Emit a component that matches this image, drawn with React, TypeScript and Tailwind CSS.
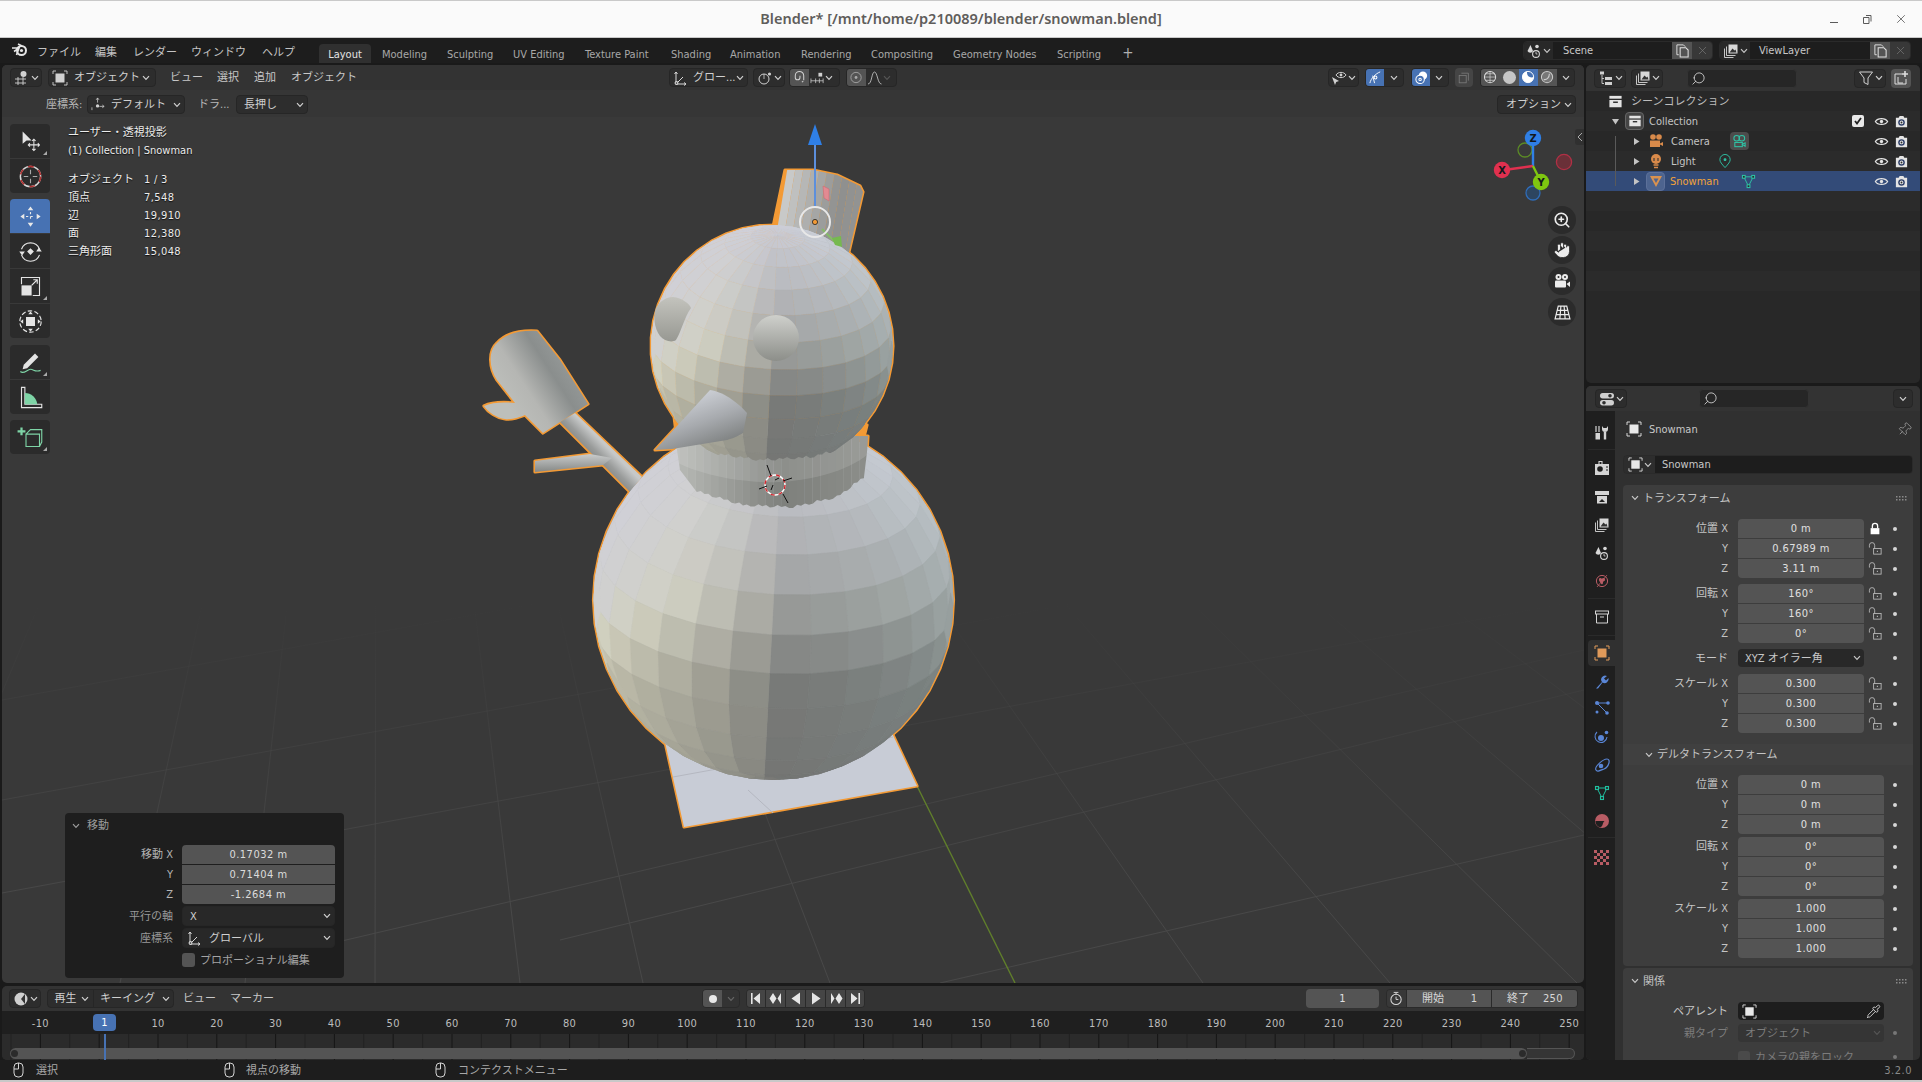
import React from "react";
import { ZoomIn, Hand, Pin, Pipette, Search, X } from "lucide-react";

type P = { children?: React.ReactNode; className?: string };
const Sv = ({ s = 16, children, className = "" }: P & { s?: number }) => (
  <svg width={s} height={s} viewBox="0 0 16 16" fill="none" stroke="currentColor" strokeWidth={1.1} className={"shrink-0 " + className}>{children}</svg>
);
const Chev = ({ className = "" }: P) => (
  <svg width="8" height="6" viewBox="0 0 8 6" fill="none" stroke="currentColor" strokeWidth={1.2} className={"shrink-0 " + className}><path d="M1 1.2 4 4.4 7 1.2" /></svg>
);
const ObjIcon = ({ s = 16, className = "" }: { s?: number; className?: string }) => (
  <Sv s={s} className={className}>
    <path d="M1 4V1h3M12 1h3v3M15 12v3h-3M4 15H1v-3" strokeWidth={0.9} />
    <rect x="3.5" y="3.5" width="9" height="9" fill="currentColor" stroke="none" />
  </Sv>
);
const Eye = () => (
  <Sv s={15} className="text-[#e4e4e4]"><path d="M1.5 8C4 3.8 12 3.8 14.5 8 12 12.2 4 12.2 1.5 8Z" strokeWidth={1.4} /><circle cx="8" cy="8" r="1.8" fill="currentColor" stroke="none" /></Sv>
);
const Cam = () => (
  <Sv s={15} className="text-[#e4e4e4]"><path d="M2 4h3l1-2h4l1 2h3v10H2Z" fill="currentColor" stroke="none" /><circle cx="8" cy="9" r="3.5" fill="#2d3e66" stroke="none" /><circle cx="8" cy="9" r="2" fill="currentColor" stroke="none" /><circle cx="8" cy="9" r="1" fill="#2d2d2d" stroke="none" /></Sv>
);
const Lock = ({ closed }: { closed?: boolean }) =>
  closed ? (
    <Sv s={14} className="text-white"><rect x="3" y="7" width="10" height="7" fill="currentColor" stroke="none" /><path d="M5 7V4.5a3 3 0 0 1 6 0V7" strokeWidth={1.5} /></Sv>
  ) : (
    <Sv s={15} className="text-[#bdbdbd]"><rect x="6" y="8" width="8" height="6" strokeWidth={0.9} /><path d="M1.5 7V4.5a2.8 2.8 0 0 1 5.6 0V8" strokeWidth={0.9} /><path d="M10 10.3v1.5" /></Sv>
  );
const Dot = ({ className = "bg-[#d6d6d6]" }: { className?: string }) => <div className={"h-[4px] w-[4px] rounded-full " + className} />;
const Axes = () => (
  <Sv s={16} className="text-[#d8d8d8]"><path d="M4 14V2M2.5 4 4 2l1.5 2M4 14h10M12 12.5l2 1.5-2 1.5M4 14l7-7" strokeWidth={1} /><circle cx="4.5" cy="13" r="1.4" fill="#333" /></Sv>
);
const Scene = () => (
  <Sv s={16} className="text-[#d8d8d8]"><path d="M4.5 2 7 8a3 3 0 0 1-5.5 0Z" fill="currentColor" stroke="none" /><circle cx="11" cy="3.5" r="1.8" fill="currentColor" stroke="none" /><circle cx="10" cy="11" r="3.4" /><path d="M10 9v2h1.5" strokeWidth={0.8} /></Sv>
);
const Layers = () => (
  <Sv s={16} className="text-[#d8d8d8]"><rect x="5.5" y="1.5" width="9" height="9" fill="#d8d8d8" stroke="none" /><path d="m6.5 9.5 3-4 2 2 1-1 1 3Z" fill="#333" stroke="none" /><path d="M3.5 3.5v9h9M1.5 5.5v9h9" strokeWidth={0.9} /></Sv>
);
const Copy = () => (
  <Sv s={15} className="text-[#e2e2e2]"><path d="M4 12.5H2V2h7l2 2" strokeWidth={1} /><path d="M5.5 5h6l2.5 2.5V15H5.5Z" strokeWidth={1.1} /></Sv>
);
const Archive = ({ s = 15, className = "text-[#e4e4e4]" }: { s?: number; className?: string }) => (
  <Sv s={s} className={className}><rect x="1.5" y="2" width="13" height="3" fill="currentColor" stroke="none" /><path d="M1.5 6.5h13V14h-13Z" fill="currentColor" stroke="none" /><rect x="5.5" y="8" width="5" height="1.6" fill="#333" stroke="none" /></Sv>
);
const VMesh = ({ className = "text-[#2ec4a6]", s = 15 }: { className?: string; s?: number }) => (
  <Sv s={s} className={className}><path d="M3 3h10L8 13Z" strokeWidth={1} /><rect x="1.5" y="1.5" width="3" height="3" fill="#2b2b2b" /><rect x="11.5" y="1.5" width="3" height="3" fill="#2b2b2b" /><rect x="6.5" y="11.5" width="3" height="3" fill="#2b2b2b" /></Sv>
);

const DD = ({ className = "", children }: P) => (
  <div className={"flex h-[19px] shrink-0 items-center overflow-hidden rounded-[4px] border border-[#262626] bg-[#2d2d2d] text-[#d0d0d0] " + className}>{children}</div>
);

/* ---------- top ---------- */
const tabs = [
  ["Modeling", "w-[65px]"], ["Sculpting", "w-[66px]"], ["UV Editing", "w-[72px]"], ["Texture Paint", "w-[86px]"], ["Shading", "w-[59px]"],
  ["Animation", "w-[71px]"], ["Rendering", "w-[70px]"], ["Compositing", "w-[82px]"], ["Geometry Nodes", "w-[104px]"], ["Scripting", "w-[64px]"],
];
const menus = [["ファイル", "w-[58px]"], ["編集", "w-[38px]"], ["レンダー", "w-[58px]"], ["ウィンドウ", "w-[71px]"], ["ヘルプ", "w-[57px]"]];

function TitleBar() {
  return (
    <div className="relative flex h-[38px] shrink-0 items-center justify-center border-y border-[#c9c9c9] bg-[#fafafa] [font-family:'Noto_Sans',sans-serif] font-stretch-normal">
      <div className="text-[14.5px] font-semibold text-[#5f5d5b]">Blender* [/mnt/home/p210089/blender/snowman.blend]</div>
      <div className="absolute right-[14px] top-0 flex h-full items-center gap-[21px] text-[#5a5a5a]">
        <svg width="12" height="12" viewBox="0 0 12 12" stroke="currentColor" fill="none"><path d="M2 9.5h8" /></svg>
        <svg width="12" height="12" viewBox="0 0 12 12" stroke="currentColor" fill="none"><path d="M2.5 4.5h5.5v6H2.5ZM5 2.5h5v6" /></svg>
        <X size={14} strokeWidth={1.4} />
      </div>
    </div>
  );
}
function TopBar() {
  return (
    <div className="flex h-[25px] shrink-0 items-stretch bg-[#1d1d1d] text-[11px] text-[#c4c4c4]">
      <div className="flex w-[37px] items-center justify-center pb-[1px]">
        <svg width="17" height="14" viewBox="0 0 17 14" fill="none" className="ml-[2px]"><circle cx="10.5" cy="7.5" r="4.5" stroke="#e6e6e6" strokeWidth="2" /><circle cx="10.5" cy="7.5" r="1.6" fill="#e6e6e6" /><path d="M1 5h7M3 8.5 8 5l-2.5 7M7 1l4 2" stroke="#e6e6e6" strokeWidth="1.6" /></svg>
      </div>
      {menus.map(([t, w]) => <div key={t} className={"flex items-center pt-[4px] " + w}><span>{t}</span></div>)}
      <div className="mt-[6px] flex w-[52px] items-center justify-center rounded-t-[4px] bg-[#303030] pt-[2px] text-[#e4e4e4]"><span>Layout</span></div>
      {tabs.map(([t, w]) => <div key={t} className={"mt-[6px] flex items-center pl-[11px] pt-[2px] text-[#a8a8a8] " + w}><span>{t}</span></div>)}
      <div className="flex w-[20px] items-center justify-center pl-[16px] pt-[5px] text-[15px] text-[#b0b0b0]">+</div>
      <div className="ml-auto mr-[11px] flex items-center gap-[6px]">
        <SceneField icon={<Scene />} label="Scene" a="w-[29px]" f="w-[119px] pl-[10px]" />
        <SceneField icon={<Layers />} label="ViewLayer" a="w-[30px]" f="w-[120px] pl-[9px]" />
      </div>
    </div>
  );
}
function SceneField({ icon, label, a, f }: { icon: React.ReactNode; label: string; a: string; f: string }) {
  return (
    <div className="flex h-[19px] overflow-hidden rounded-[4px] border border-[#2a2a2a]">
      <div className={"flex items-center justify-center gap-[1px] bg-[#282828] " + a}>{icon}<Chev /></div>
      <div className={"flex items-center bg-[#1d1d1d] text-[#c8c8c8] " + f}><span>{label}</span></div>
      <div className="flex w-[20px] items-center justify-center bg-[#545454]"><Copy /></div>
      <div className="flex w-[20px] items-center justify-center bg-[#383838] text-[#777]"><X size={13} strokeWidth={1.3} /></div>
    </div>
  );
}

/* ---------- viewport header ---------- */
function ViewHeader() {
  return (
    <div className="flex h-[25px] shrink-0 items-center bg-[#333] pl-[8px] pr-[9px] text-[11px] text-[#c8c8c8]">
      <DD className="w-[32px] justify-center gap-[1px]">
        <Sv s={16}><path d="M1 9h11M1 13h11M4 7v8M9 7v8" strokeWidth={0.9} /><circle cx="9.5" cy="4" r="3" fill="currentColor" stroke="none" /></Sv><Chev />
      </DD>
      <DD className="ml-[6px] w-[108px] px-[3px]">
        <ObjIcon s={16} /><span className="ml-[6px] flex-1">オブジェクト</span><Chev className="mr-[2px]" />
      </DD>
      <span className="ml-[14px] w-[47px]">ビュー</span>
      <span className="w-[37px]">選択</span>
      <span className="w-[37px]">追加</span>
      <span className="w-[378px]">オブジェクト</span>
      <DD className="w-[79px] px-[2px]"><Axes /><span className="ml-[5px] flex-1 whitespace-nowrap">グロー...</span><Chev className="mr-[1px]" /></DD>
      <DD className="ml-[5px] w-[32px] justify-center gap-[1px]">
        <Sv s={16}><circle cx="7" cy="9" r="5" strokeWidth={1} /><circle cx="12.5" cy="4" r="1.6" fill="currentColor" stroke="none" /><path d="M7 4v5" strokeWidth={0.8} /></Sv><Chev />
      </DD>
      <DD className="ml-[4px] w-[51px]">
        <div className="flex h-full w-[19px] items-center justify-center bg-[#545454]"><Sv s={15}><path d="M12.5 11V6a4.5 4.5 0 0 0-9 0v2a2.5 2.5 0 0 0 5 0V6" strokeWidth={1.1} /><path d="M10.5 13 12 12" /></Sv></div>
        <Sv s={15} className="ml-[1px]"><path d="M1 9v5M14 9v5M6 9v5M10 9v5M1 11.5h13" strokeWidth={0.8} /><rect x="9" y="3" width="4" height="4" fill="currentColor" stroke="none" /></Sv><Chev />
      </DD>
      <DD className="ml-[6px] w-[51px]">
        <div className="flex h-full w-[19px] items-center justify-center bg-[#545454]"><Sv s={15} className="text-[#aaa]"><circle cx="7.5" cy="8" r="5.5" strokeWidth={0.9} /><circle cx="7.5" cy="8" r="1.5" fill="currentColor" stroke="none" /></Sv></div>
        <Sv s={16} className="ml-[1px] text-[#bdbdbd]"><path d="M1 14c4 0 3.5-12 6.5-12s3 12 7 12" strokeWidth={0.9} /></Sv><Chev className="text-[#555]" />
      </DD>
      <DD className="ml-auto w-[31px] justify-center gap-[1px]">
        <Sv s={16}><path d="M5 5C7 1.5 13 1.5 15 5 13 8.5 7 8.5 5 5Z" strokeWidth={1} /><circle cx="10" cy="5" r="1.4" fill="currentColor" stroke="none" /><path d="m1 7 3 8 1.2-3L8 11Z" fill="currentColor" stroke="none" /></Sv><Chev />
      </DD>
      <DD className="ml-[6px] w-[39px]">
        <div className="flex h-full w-[18px] items-center justify-center bg-[#4772b3] text-white"><Sv s={15}><path d="M2 14C3 9 8 4 13 2M5 6l2 8" strokeWidth={1} /><circle cx="8" cy="8" r="1.5" /></Sv></div>
        <Chev className="mx-auto" />
      </DD>
      <DD className="ml-[7px] w-[38px]">
        <div className="flex h-full w-[18px] items-center justify-center bg-[#4772b3] text-white"><Sv s={15}><circle cx="9.5" cy="6" r="4.5" fill="currentColor" stroke="none" /><circle cx="6.5" cy="10" r="4.5" fill="#4772b3" /><circle cx="6.5" cy="10" r="1.3" /></Sv></div>
        <Chev className="mx-auto" />
      </DD>
      <div className="ml-[6px] flex h-[19px] w-[18px] shrink-0 items-center justify-center rounded-[4px] bg-[#454545] text-[#7e7e7e]"><Sv s={14}><path d="M5 2.5h8V11" strokeWidth={0.9} /><rect x="2.5" y="5" width="8" height="8.5" strokeWidth={0.9} /></Sv></div>
      <DD className="ml-[7px] w-[95px] border-[#2a2a2a]">
        <div className="flex h-full w-[19px] items-center justify-center bg-[#545454]"><Sv s={15} className="text-[#ddd]"><circle cx="7.5" cy="7.5" r="6" /><path d="M1.5 7.5h12M7.5 1.5v12M3 4h9M3 11h9" strokeWidth={0.7} /></Sv></div>
        <div className="flex h-full w-[19px] items-center justify-center bg-[#545454]"><div className="h-[13px] w-[13px] rounded-full bg-[#c6c6c6]" /></div>
        <div className="flex h-full w-[19px] items-center justify-center bg-[#4772b3]"><Sv s={15} className="text-white"><circle cx="7.5" cy="7.5" r="6" strokeWidth={1} /><path d="M1.5 7.5a6 6 0 0 0 12 0 6 6 0 0 1-6-1 7 7 0 0 1-1-5 6 6 0 0 0-5 6Z" fill="currentColor" stroke="none" /></Sv></div>
        <div className="flex h-full w-[19px] items-center justify-center bg-[#545454]"><Sv s={15} className="text-[#ccc]"><circle cx="7.5" cy="7.5" r="6" fill="#777" /><path d="M4 10c3 1 6-2 6-6" strokeWidth={1.2} /></Sv></div>
        <Chev className="mx-auto" />
      </DD>
    </div>
  );
}
function ToolSettings() {
  return (
    <div className="flex h-[27px] shrink-0 items-center bg-[#363636] pl-[44px] pr-[8px] pt-[2px] text-[11px] text-[#b8b8b8]">
      <span className="w-[41px]">座標系:</span>
      <DD className="w-[98px] px-[3px]"><Sv s={15}><path d="M7 1v5M5.5 3 7 1l1.5 2M1 14V11M9 10h5M12 8.5l2 1.5-2 1.5" strokeWidth={0.8} /><circle cx="7" cy="9.5" r="1.8" fill="currentColor" stroke="none" /></Sv><span className="ml-[5px] flex-1">デフォルト</span><Chev /></DD>
      <span className="ml-[13px] w-[38px]">ドラ...</span>
      <DD className="w-[72px] pl-[7px] pr-[3px]"><span className="flex-1">長押し</span><Chev /></DD>
      <DD className="ml-auto w-[79px] pl-[8px] pr-[3px]"><span className="flex-1">オプション</span><Chev /></DD>
    </div>
  );
}

/* ---------- left tools ---------- */
const Corner = () => <div className="absolute bottom-[3px] right-[3px] h-0 w-0 border-b-[4px] border-l-[4px] border-b-[#aaa] border-l-transparent" />;
function Tool({ children, corner, active, cls = "" }: { children: React.ReactNode; corner?: boolean; active?: boolean; cls?: string }) {
  return <div className={"relative flex h-[34px] items-center justify-center " + (active ? "bg-[#4772b3] " : "bg-[#2b2b2b] ") + cls}>{children}{corner && <Corner />}</div>;
}
const T24 = ({ children }: P) => <svg width="27" height="27" viewBox="0 0 24 24" fill="none" stroke="#e4e4e4" strokeWidth={1}>{children}</svg>;
function ToolBar() {
  return (
    <div className="absolute left-[8px] top-[59px] flex w-[40px] flex-col text-white">
      <div className="flex flex-col gap-[1px] overflow-hidden rounded-[4px]">
        <Tool corner><T24><path d="M5 3v11l3.5-3H13Z" fill="#e4e4e4" stroke="none" /><path d="M15 10v10M10 15h10M13.5 11.5 15 10l1.5 1.5M13.5 18.5 15 20l1.5-1.5M11.5 13.5 10 15l1.5 1.5M18.5 13.5 20 15l-1.5 1.5" strokeWidth={0.9} /></T24></Tool>
        <Tool><T24><circle cx="12" cy="12" r="9" stroke="#d8d8d8" strokeWidth={1.3} /><circle cx="12" cy="12" r="9" stroke="#b03030" strokeWidth={1.4} strokeDasharray="5 5" /><path d="M12 6v4M12 14v4M6 12h4M14 12h4" stroke="#aaa" /></T24></Tool>
      </div>
      <div className="mt-[6px] flex flex-col gap-[1px] overflow-hidden rounded-[4px]">
        <Tool active><T24><path d="M12 3l2.5 3.5h-5ZM12 21l2.5-3.5h-5ZM3 12l3.5-2.5v5ZM21 12l-3.5-2.5v5Z" fill="#e8e8e8" stroke="none" /><path d="M12 8v8M8 12h8" stroke="#e8e8e8" strokeDasharray="2 2" /></T24></Tool>
        <Tool><T24><path d="M4 10a8.5 8.5 0 0 1 16 0M20 15a8.5 8.5 0 0 1-16 0" /><path d="M2 12h5l-2.5 3.5ZM17 12h5l-2.5-3.5ZM12 9l3 3-3 3-3-3Z" fill="#e4e4e4" stroke="none" /></T24></Tool>
        <Tool corner><T24><rect x="4" y="11" width="9" height="9" fill="#e4e4e4" stroke="none" /><path d="M4 10V4h16v16h-6M13 11l5-5M14.5 6H18v3.5" /></T24></Tool>
        <Tool><T24><circle cx="12" cy="12" r="9.5" strokeDasharray="4 2" /><rect x="8" y="8" width="8" height="8" fill="#e4e4e4" stroke="none" /><path d="M12 3l2 2.5h-4ZM12 21l2-2.5h-4ZM3 12l2.5-2v4ZM21 12l-2.5-2v4Z" fill="#e4e4e4" stroke="none" /></T24></Tool>
      </div>
      <div className="mt-[7px] flex flex-col gap-[1px] overflow-hidden rounded-[4px]">
        <Tool corner><T24><path d="M6 14 16 4l3 3L9 17l-4 1Z" fill="#e4e4e4" stroke="none" /><path d="M3 20c3 3 6-2 9-2s4 3 9 1" stroke="#7ed4a6" /></T24></Tool>
        <Tool><T24><path d="M4 3h3v15h15v3H4Z" stroke="#e4e4e4" /><path d="M7 8a11 11 0 0 1 11 10H7Z" fill="#7ed4a6" stroke="none" /></T24></Tool>
      </div>
      <div className="mt-[6px] overflow-hidden rounded-[4px]">
        <Tool corner><T24><path d="M8 9h12v11H8ZM8 9l4-4h10v11l-2 4" stroke="#7ed4a6" /><path d="M4 3v7M0.5 6.5h7" stroke="#7ed4a6" strokeWidth={2} /></T24></Tool>
      </div>
    </div>
  );
}

/* ---------- snowman ---------- */
const lerp = (a: number, b: number, t: number) => a + (b - a) * t;
function shade(nx: number, ny: number) {
  const tbl = [[-1, 116], [-0.5, 120], [-0.3, 134], [0, 158], [0.5, 184], [1, 204]];
  let r = 158;
  for (let i = 0; i < 5; i++) if (ny >= tbl[i][0] && ny <= tbl[i + 1][0]) r = lerp(tbl[i][1], tbl[i + 1][1], (ny - tbl[i][0]) / (tbl[i + 1][0] - tbl[i][0]));
  const w = Math.pow(Math.max(0, -nx), 0.6);
  const e = Math.max(0, nx);
  const amp = Math.max(16, 70 - 62 * Math.max(0, ny));
  const R = Math.min(208, r + amp * w + 2 * e);
  const G = Math.min(208, r + 1 + amp * 0.96 * w + 9 * e);
  const B = Math.min(216, r + (ny > 0 ? 10 * ny : -1) + amp * 0.72 * w + 10 * e);
  return `rgb(${Math.round(R)},${Math.round(G)},${Math.round(B)})`;
}
function sphere(cx: number, cy: number, r: number, eDeg: number, rollDeg: number) {
  const M = 14, N = 28;
  const e = (eDeg * Math.PI) / 180, ro = (rollDeg * Math.PI) / 180;
  const pt = (t: number, p: number) => {
    const x = Math.sin(t) * Math.cos(p), y = Math.cos(t), z = Math.sin(t) * Math.sin(p);
    const y1 = y * Math.cos(e) - z * Math.sin(e), z1 = y * Math.sin(e) + z * Math.cos(e);
    return [x * Math.cos(ro) + y1 * Math.sin(ro), -x * Math.sin(ro) + y1 * Math.cos(ro), z1];
  };
  const out: { pts: string; fill: string }[] = [];
  for (let i = 0; i < M; i++) for (let j = 0; j < N; j++) {
    const t0 = (i * Math.PI) / M, t1 = ((i + 1) * Math.PI) / M, p0 = (j * 2 * Math.PI) / N, p1 = ((j + 1) * 2 * Math.PI) / N;
    const c = pt((t0 + t1) / 2, (p0 + p1) / 2);
    if (c[2] < -0.15) continue;
    const pts = [pt(t0, p0), pt(t1, p0), pt(t1, p1), pt(t0, p1)].map((q) => `${(cx + r * q[0]).toFixed(1)},${(cy - r * q[1]).toFixed(1)}`).join(" ");
    out.push({ pts, fill: shade(c[0], c[1]) });
  }
  return out;
}
const circlePath = (cx: number, cy: number, r: number) => {
  let d = "";
  for (let i = 0; i < 48; i++) { const a = (i / 48) * 2 * Math.PI; d += `${i ? "L" : "M"}${(cx + r * Math.cos(a)).toFixed(1)},${(cy + r * Math.sin(a)).toFixed(1)} `; }
  return d + "Z";
};
const jag = (pts: number[][]) => {
  let d = "", k = 0;
  for (let i = 0; i < pts.length - 1; i++) {
    const [a, b] = pts[i], [c, e] = pts[i + 1];
    const n = Math.max(1, Math.round(Math.hypot(c - a, e - b) / 4));
    for (let s = 0; s < n; s++) { const o = [1.3, -0.8, 0.5, -1.4, 0.9][k++ % 5]; d += `L${(a + ((c - a) * s) / n).toFixed(1)},${(b + ((e - b) * s) / n + o).toFixed(1)} `; }
  }
  return d;
};
const headArc = (() => {
  let d = "";
  for (let a = -40; a <= 220; a += 8) { const r = (a * Math.PI) / 180; d += `${a === -40 ? "M" : "L"}${(772 + 121 * Math.cos(r)).toFixed(1)},${(346 - 121 * Math.sin(r)).toFixed(1)} `; }
  return d;
})();
const bodyD = circlePath(773.5, 600, 180);
const headD = headArc + jag([[678, 446], [713, 453], [760, 460], [810, 457], [866, 443]]) + "L867,425 Z";
const neckD = "M675,436 L868,436 L867,452 L864,477 " + jag([[864, 477], [837, 497], [793, 507], [743, 505], [693, 490]]) + "L680,470 Z";
const hatD = "M773,227 L785,170 L813,170 L837,175 L860,186 L863,192 L848,256 Z";
const planeD = "M665,742 L684,827 L917,786 L892,733 Z";
const stickD = "M642,477 L630,492 L560,422 L575,413 Z";
const branchD = "M535,461 L535,472 L603,465 L612,458 L590,454 Z";
const mittenD = "M537,331 C520,330 505,334 497,343 C488,351 489,368 497,380 L515,403 C505,402 492,402 484,406 C488,412 497,418 505,419 C512,420 520,417 525,415 L543,433 L588,404 L560,360 Z";
const noseD = "M655,450 L710,390 C725,392 740,405 747,413 L743,433 C735,438 727,440 727,440 L672,449 Z";
const eyeL = "M673,297 C682,298 690,304 691,308 C684,318 682,330 676,340 C672,343 664,341 660,336 C654,328 653,315 656,308 C660,301 666,297 673,297 Z";
const bodyPolys = sphere(773.5, 600, 181, 24, 3);
const headPolys = sphere(772, 346, 122, 24, 3);
const hatStrips = Array.from({ length: 12 }, (_, k) => {
  const x = 772 + k * 8;
  const t = k / 11;
  const v = Math.round(t < 0.6 ? lerp(200, 142, t / 0.6) : lerp(142, 150, (t - 0.6) / 0.4));
  return { d: `M${x},260 L${x + 8},260 L${x + 24},165 L${x + 16},165 Z`, f: `rgb(${v},${v + 1},${v})` };
});
const neckStrips = Array.from({ length: 26 }, (_, k) => {
  const x = 672 + k * 7.8;
  const t = k / 25;
  const v = t < 0.55 ? lerp(184, 126, t / 0.55) : lerp(126, 140, (t - 0.55) / 0.45);
  return { d: `M${x},430 h8 v85 h-8 Z`, f: `rgb(${v.toFixed(0)},${(v + 2).toFixed(0)},${(v - 2).toFixed(0)})` };
});
const gridA = [[2, 800, 1584, 510], [2, 893, 1584, 600], [282, 955, 1584, 650], [560, 940, 1584, 690], [940, 983, 1584, 835], [2, 700, 1000, 520]];
const gridB = [-120, 120, 245, 375, 520, 643, 830, 1203, 1390, 1577, 1760, 1950];

function Snowman() {
  const sil = [planeD, hatD, stickD, branchD, mittenD, bodyD, neckD, headD, noseD];
  return (
    <svg className="absolute inset-0 h-full w-full" viewBox="2 65 1582 918">
      <defs>
        <linearGradient id="gf" gradientUnits="userSpaceOnUse" x1="0" y1="600" x2="0" y2="900"><stop offset="0" stopColor="#464646" stopOpacity="0" /><stop offset="1" stopColor="#484848" /></linearGradient>
        <linearGradient id="mit" gradientUnits="userSpaceOnUse" x1="498" y1="392" x2="560" y2="352"><stop offset="0" stopColor="#bdbfbb" /><stop offset=".35" stopColor="#b5b6b3" /><stop offset=".75" stopColor="#8a8e8d" /><stop offset="1" stopColor="#949897" /></linearGradient>
        <linearGradient id="stk" gradientUnits="userSpaceOnUse" x1="590" y1="430" x2="575" y2="445"><stop offset="0" stopColor="#c6c8c8" /><stop offset=".5" stopColor="#9a9c9b" /><stop offset="1" stopColor="#7e8280" /></linearGradient>
        <linearGradient id="brn" gradientUnits="userSpaceOnUse" x1="0" y1="455" x2="0" y2="472"><stop offset="0" stopColor="#c6c8c8" /><stop offset="1" stopColor="#858886" /></linearGradient>
        <linearGradient id="nos" gradientUnits="userSpaceOnUse" x1="700" y1="395" x2="718" y2="445"><stop offset="0" stopColor="#c9ccd2" /><stop offset=".5" stopColor="#a7aaae" /><stop offset="1" stopColor="#7f8282" /></linearGradient>
        <linearGradient id="eye" gradientUnits="userSpaceOnUse" x1="0" y1="315" x2="0" y2="362"><stop offset="0" stopColor="#cfd0cc" /><stop offset="1" stopColor="#8b8d88" /></linearGradient>
        <linearGradient id="eyl" gradientUnits="userSpaceOnUse" x1="0" y1="297" x2="0" y2="342"><stop offset="0" stopColor="#c3c3bd" /><stop offset="1" stopColor="#979892" /></linearGradient>
        <clipPath id="cb"><path d={bodyD} /></clipPath>
        <clipPath id="ch"><path d={headD} /></clipPath>
        <clipPath id="cn"><path d={neckD} /></clipPath>
        <clipPath id="cht"><path d={hatD} /></clipPath>
      </defs>
      {gridA.map((l, i) => <line key={i} x1={l[0]} y1={l[1]} x2={l[2]} y2={l[3]} stroke="url(#gf)" strokeWidth="1" />)}
      {gridB.map((x) => <line key={x} x1={377} y1={-200} x2={x} y2={983} stroke="url(#gf)" strokeWidth="1" />)}
      <line x1="917" y1="786" x2="1015" y2="983" stroke="#607f2b" strokeWidth="1.4" />

      {sil.map((d, i) => <path key={i} d={d} fill="#f39a35" stroke="#f39a35" strokeWidth="3.2" strokeLinejoin="round" />)}
      <path d={planeD} fill="#c8ccd6" />
      <line x1="673" y1="777" x2="893" y2="737" stroke="#b4b7c0" strokeWidth="1" />
      <line x1="748" y1="790" x2="773" y2="813" stroke="#b4b7c0" strokeWidth="1" />
      <g clipPath="url(#cht)">{hatStrips.map((s, i) => <path key={i} d={s.d} fill={s.f} />)}</g>
      <path d={stickD} fill="url(#stk)" />
      <path d={branchD} fill="url(#brn)" />
      <path d={mittenD} fill="url(#mit)" />
      <path d={bodyD} fill="#a5a7a8" />
      <g clipPath="url(#cb)">{bodyPolys.map((p, i) => <polygon key={i} points={p.pts} fill={p.fill} stroke={p.fill} strokeWidth=".5" />)}</g>
      <g clipPath="url(#cn)">
        {neckStrips.map((s, i) => <path key={i} d={s.d} fill={s.f} />)}
        <path d="M670,430 H870 V452 C850,472 800,484 760,482 C720,480 690,470 672,460 Z" fill="#fff" opacity=".12" />
      </g>
      <g clipPath="url(#ch)">{headPolys.map((p, i) => <polygon key={i} points={p.pts} fill={p.fill} stroke={p.fill} strokeWidth=".5" />)}</g>
      <circle cx="776" cy="338" r="23" fill="url(#eye)" />
      <path d={eyeL} fill="url(#eyl)" />
      <path d={noseD} fill="url(#nos)" />

      {/* transform gizmo */}
      <line x1="815" y1="145" x2="815" y2="207" stroke="#5c8fdc" strokeWidth="2" />
      <path d="M815,124 L822,145 H808 Z" fill="#2f7fe6" />
      <path d="M823,186 L829,189 L829,201 L824,198 Z" fill="#e28a92" stroke="#d06a72" strokeWidth=".6" />
      <line x1="822" y1="229" x2="836" y2="243" stroke="#86bb68" strokeWidth="2" />
      <path d="M832,238 L841,236 L842,247 L835,245 Z" fill="#76b94f" />
      <circle cx="815" cy="222" r="15" fill="none" stroke="#e8e8e8" strokeWidth="2" />
      <circle cx="815" cy="222" r="2.6" fill="#f39a35" stroke="#222" strokeWidth=".8" />

      {/* 3d cursor */}
      <circle cx="775" cy="485" r="10" fill="none" stroke="#fff" strokeWidth="1.4" />
      <circle cx="775" cy="485" r="10" fill="none" stroke="#d0282f" strokeWidth="1.4" strokeDasharray="4 4" />
      <path d="M767,465 L771,476 M783,494 L788,503 M759,489 L767,486 M783,481 L792,478 M775,480 L779,478 M771,490 L773,485" stroke="#111" strokeWidth="1" />

      {/* navigation gizmo */}
      <circle cx="1525" cy="150" r="7" fill="none" stroke="#5b8a26" strokeWidth="1.3" />
      <circle cx="1564" cy="162" r="7.6" fill="#6a3038" stroke="#b03045" strokeWidth="1.3" />
      <circle cx="1533" cy="193" r="7" fill="#2d4560" stroke="#2f6cb8" strokeWidth="1.3" />
      <line x1="1533" y1="166" x2="1533" y2="140" stroke="#2f7fe6" strokeWidth="2.4" />
      <line x1="1533" y1="166" x2="1504" y2="170" stroke="#e0304f" strokeWidth="2.4" />
      <line x1="1533" y1="166" x2="1541" y2="182" stroke="#7fc610" strokeWidth="2.4" />
      <g fontSize="11" fontWeight="700" textAnchor="middle" fontFamily="'DejaVu Sans',sans-serif" fill="#14181c">
        <circle cx="1533" cy="138" r="8.2" fill="#2f7fe6" /><text x="1533" y="142">Z</text>
        <circle cx="1502" cy="170" r="8.2" fill="#e0304f" /><text x="1502" y="174">X</text>
        <circle cx="1541" cy="182" r="8.2" fill="#7fc610" /><text x="1541" y="186">Y</text>
      </g>
    </svg>
  );
}

/* ---------- viewport ---------- */
const NavBtn = ({ children, cls }: P & { cls: string }) => (
  <div className={"absolute left-[1546px] flex h-[28px] w-[28px] items-center justify-center rounded-full bg-[#2b2b2b] text-[#ececec] " + cls}>{children}</div>
);
const stats = [["頂点", "7,548"], ["辺", "19,910"], ["面", "12,380"], ["三角形面", "15,048"]];
function Viewport() {
  return (
    <div className="relative flex min-h-0 flex-1 flex-col overflow-hidden rounded-[5px] bg-[#393939]">
      <Snowman />
      <div className="relative z-10 flex flex-col"><ViewHeader /><ToolSettings /></div>
      <ToolBar />
      <div className="absolute left-[66px] top-[58px] text-[11px] leading-[18px] text-[#ececec] [text-shadow:0_1px_1px_#111]">
        <div><span className="block">ユーザー・透視投影</span></div>
        <div><span className="block">(1) Collection | Snowman</span></div>
        <div className="mt-[11px] flex"><span className="w-[76px]">オブジェクト</span><span className="tracking-[0.3px]">1 / 3</span></div>
        {stats.map(([a, b]) => <div key={a} className="flex"><span className="w-[76px]">{a}</span><span className="tracking-[0.4px]">{b}</span></div>)}
      </div>
      <NavBtn cls="top-[141px]"><ZoomIn size={18} strokeWidth={2.2} /></NavBtn>
      <NavBtn cls="top-[171px]"><Hand size={18} fill="#ececec" stroke="#2b2b2b" strokeWidth={1} /></NavBtn>
      <NavBtn cls="top-[202px]"><svg width="18" height="16" viewBox="0 0 18 16" fill="#ececec"><circle cx="5.500" cy="4" r="3" /><circle cx="12" cy="4" r="3" /><rect x="2" y="7.500" width="11" height="7" rx="1" /><path d="M13.500 11 17 8.500v5.500Z" /><circle cx="5.500" cy="4" r="1" fill="#2b2b2b" /><circle cx="12" cy="4" r="1" fill="#2b2b2b" /></svg></NavBtn>
      <NavBtn cls="top-[233px]"><Sv s={17}><path d="M4 2h8l3 12H1ZM1.500 10h13M3 6h10M6.500 2l-1 12M9.500 2l1 12" strokeWidth={1.1} /></Sv></NavBtn>
      <div className="absolute left-[1573px] top-[64px] flex h-[16px] w-[9px] items-center justify-center rounded-l-[3px] bg-[#303030] text-[#aaa]">
        <svg width="6" height="10" viewBox="0 0 6 10" fill="none" stroke="currentColor"><path d="M5 1 1 5l4 4" /></svg>
      </div>
      <RedoPanel />
    </div>
  );
}
function RedoPanel() {
  const F = ({ l, v, cls }: { l: string; v: string; cls: string }) => (
    <div className="mt-[1px] flex h-[19px] items-center"><span className="w-[107px] pr-[9px] text-right text-[#b4b4b4]">{l}</span><div className={"flex h-full w-[153px] items-center justify-center bg-[#545454] text-[#dcdcdc] " + cls}><span className="tracking-[0.5px]">{v}</span></div></div>
  );
  return (
    <div className="absolute bottom-[5px] left-[63px] h-[165px] w-[279px] rounded-[4px] bg-[#1e1e1e] pl-[10px] text-[11px]">
      <div className="flex h-[24px] items-center pt-[1px] text-[#9c9c9c]"><Chev className="-ml-[3px]" /><span className="ml-[7px]">移動</span></div>
      <div className="h-[7px]" />
      <F l="移動 X" v="0.17032 m" cls="rounded-t-[4px]" />
      <F l="Y" v="0.71404 m" cls="" />
      <F l="Z" v="-1.2684 m" cls="rounded-b-[4px]" />
      <div className="mt-[2px] flex h-[20px] items-center"><span className="w-[107px] pr-[9px] text-right text-[#999]">平行の軸</span><DD className="h-[20px] w-[153px] bg-[#282828] pl-[7px] pr-[3px]"><span className="flex-1">X</span><Chev /></DD></div>
      <div className="mt-[2px] flex h-[20px] items-center"><span className="w-[107px] pr-[9px] text-right text-[#999]">座標系</span><DD className="h-[20px] w-[153px] bg-[#282828] pl-[3px] pr-[3px]"><Axes /><span className="ml-[7px] flex-1">グローバル</span><Chev /></DD></div>
      <div className="mt-[5px] flex h-[14px] items-center pl-[107px] text-[#a4a4a4]"><div className="h-[14px] w-[13px] rounded-[3px] bg-[#545454]" /><span className="ml-[5px]">プロポーショナル編集</span></div>
    </div>
  );
}

/* ---------- timeline ---------- */
const fx = (f: number) => 97.2 + f * 5.88;
const nums = Array.from({ length: 27 }, (_, i) => -10 + i * 10);
const Seg = ({ children, cls = "" }: P & { cls?: string }) => <div className={"flex h-full items-center justify-center border-r border-[#2a2a2a] bg-[#454545] text-[#e0e0e0] " + cls}>{children}</div>;
const Tri = ({ d }: { d: string }) => <svg width="14" height="13" viewBox="0 0 14 13" fill="#e6e6e6"><path d={d} /></svg>;
function Timeline() {
  return (
    <div className="flex h-[74px] shrink-0 flex-col overflow-hidden rounded-[5px] bg-[#2b2b2b] text-[11px]">
      <div className="flex h-[25px] shrink-0 items-center bg-[#333] pl-[7px] text-[#c8c8c8]">
        <DD className="w-[32px] justify-center gap-[1px]">
          <Sv s={16}><circle cx="8" cy="8" r="6.500" fill="currentColor" stroke="none" /><path d="M12 3 8 8l4 5Z" fill="#333" stroke="none" /></Sv><Chev />
        </DD>
        <DD className="ml-[6px] w-[127px]">
          <div className="flex h-full w-[46px] items-center justify-center gap-[4px] border-r border-[#262626] pl-[2px]"><span>再生</span><Chev /></div>
          <div className="flex h-full flex-1 items-center justify-between pl-[6px] pr-[3px]"><span>キーイング</span><Chev /></div>
        </DD>
        <span className="ml-[9px] w-[47px]">ビュー</span>
        <span className="w-[472px]">マーカー</span>
        <div className="flex h-[19px] w-[38px] items-center overflow-hidden rounded-[4px] border border-[#2a2a2a]">
          <div className="flex h-full w-[19px] items-center justify-center bg-[#545454]"><div className="h-[8px] w-[8px] rounded-full bg-[#e8e8e8]" /></div>
          <Chev className="mx-auto text-[#666]" />
        </div>
        <div className="ml-[6px] flex h-[19px] w-[119px] overflow-hidden rounded-[4px] border border-[#2a2a2a]">
          <Seg cls="w-[19px]"><Tri d="M2 1h1.600v11H2ZM11 1v11L4.500 6.500Z" /></Seg>
          <Seg cls="w-[20px]"><Tri d="M4 1l3.500 5.500L4 12 .5 6.500ZM12 1v11L8.500 6.500Z" /></Seg>
          <Seg cls="w-[20px]"><Tri d="M11 .5v12L2.500 6.500Z" /></Seg>
          <Seg cls="w-[20px]"><Tri d="M3 .5v12l8.500-6Z" /></Seg>
          <Seg cls="w-[20px]"><Tri d="M2 1v11l3.500-5.500ZM10 1l3.500 5.500L10 12 6.500 6.500Z" /></Seg>
          <Seg cls="flex-1 border-r-0"><Tri d="M3 1v11l6.500-5.500ZM10.400 1H12v11h-1.600Z" /></Seg>
        </div>
        <div className="ml-[441px] flex h-[19px] w-[73px] items-center justify-center rounded-[4px] bg-[#545454] text-[#e0e0e0]"><span>1</span></div>
        <div className="ml-[7px] flex h-[19px] w-[192px] overflow-hidden rounded-[4px] border border-[#2a2a2a] text-[#d8d8d8]">
          <div className="flex h-full w-[19px] items-center justify-center bg-[#383838]"><Sv s={15}><circle cx="7.500" cy="9" r="5.500" /><path d="M5 1.500h5M7.500 1.500v2M7.500 6v3h2.500" strokeWidth={1} /></Sv></div>
          <div className="flex h-full w-[86px] items-center justify-between border-x border-[#2a2a2a] bg-[#545454] px-[15px] pr-[14px]"><span>開始</span><span>1</span></div>
          <div className="flex h-full flex-1 items-center justify-between bg-[#545454] pl-[15px] pr-[14px]"><span>終了</span><span className="tracking-[0.4px]">250</span></div>
        </div>
      </div>
      <div className="relative h-[23px] shrink-0 bg-[#1f1f1f] text-[#bcbcbc]">
        {nums.map((n) => <span key={n} className="absolute top-[4px] w-[40px] -translate-x-1/2 text-center tracking-[0.3px]" style={{ left: fx(n) }}>{n}</span>)}
        <div className="absolute left-[91px] top-[3px] flex h-[17px] w-[23px] items-center justify-center rounded-[4px] bg-[#4772b3] text-white"><span>1</span></div>
      </div>
      <div className="relative flex-1 bg-[#2b2b2b]">
        <svg className="absolute inset-0 h-full w-full">
          {Array.from({ length: 54 }, (_, i) => {
            const f = -15 + i * 5;
            return <line key={f} x1={fx(f)} x2={fx(f)} y1="0" y2="26" stroke={f % 10 === 0 ? "#161616" : "#222"} strokeWidth="1" />;
          })}
        </svg>
        <div className="absolute left-[8px] right-[8px] top-[14px] h-[11px]">
          <div className="absolute inset-y-0 left-0 flex w-[1517px] items-center rounded-full bg-[#545454] pl-[1px]">
            <div className="h-[7px] w-[7px] rounded-full bg-[#2b2b2b]" />
            <div className="ml-auto mr-[1px] h-[7px] w-[7px] rounded-full bg-[#2b2b2b]" />
          </div>
          <div className="absolute inset-y-0 left-[1517px] w-[48px] rounded-r-full border border-l-0 border-[#555] bg-[#353535]" />
        </div>
        <div className="absolute bottom-0 left-[102px] top-0 w-[2px] bg-[#4772b3]" />
      </div>
    </div>
  );
}

/* ---------- outliner ---------- */
const Arrow = ({ open, cls }: { open?: boolean; cls: string }) => (
  <svg width="7" height="7" viewBox="0 0 7 7" fill="#c4c4c4" className={"shrink-0 " + cls}>{open ? <path d="M0 1h7L3.500 6.500Z" /> : <path d="M1 0v7l5.500-3.500Z" />}</svg>
);
function Row({ cls, children, eye = true, check }: { cls: string; children: React.ReactNode; eye?: boolean; check?: boolean }) {
  return (
    <div className={"flex h-[20px] items-center " + cls}>
      {children}
      {eye && (
        <div className="ml-auto mr-[11px] flex items-center gap-[5px]">
          {check && <div className="mr-[5px] flex h-[12px] w-[12px] items-center justify-center rounded-[2px] bg-[#e8e8e8] text-[#222]"><svg width="10" height="10" viewBox="0 0 10 10" fill="none" stroke="currentColor" strokeWidth="1.8"><path d="m2 5 2 2.500L8 2" /></svg></div>}
          <Eye /><Cam />
        </div>
      )}
    </div>
  );
}
function Outliner() {
  return (
    <div className="flex h-[318px] shrink-0 flex-col overflow-hidden rounded-[5px] bg-[#282828] text-[11px] text-[#c4c4c4]">
      <div className="flex h-[26px] shrink-0 items-center bg-[#333] pl-[8px] pr-[9px]">
        <DD className="w-[32px] justify-center gap-[1px]"><Sv s={16}><rect x="2" y="1.500" width="4" height="3" fill="currentColor" stroke="none" /><path d="M4 5v8.500h2M4 8.500h2" strokeWidth={0.9} /><rect x="7" y="7" width="7" height="3" fill="currentColor" stroke="none" /><rect x="7" y="12" width="7" height="3" fill="currentColor" stroke="none" /></Sv><Chev /></DD>
        <DD className="ml-[5px] w-[32px] justify-center gap-[1px]"><Layers /><Chev /></DD>
        <div className="ml-[24px] flex h-[19px] w-[110px] items-center rounded-[4px] border border-[#333] bg-[#262626] pl-[3px] text-[#e0e0e0]"><Search size={15} strokeWidth={1.3} className="-scale-x-100" /></div>
        <DD className="ml-auto w-[32px] justify-center gap-[1px]"><Sv s={16}><path d="M1.500 2h13L10 8v6.500l-4-2V8Z" strokeWidth={1} /></Sv><Chev /></DD>
        <div className="ml-[5px] flex h-[19px] w-[20px] items-center justify-center rounded-[4px] bg-[#545454] text-[#ddd]"><Sv s={16}><path d="M2 4h7M2 4v10h11V9M5 7v6h5" strokeWidth={1} /><path d="M12 1v6M9 4h6" strokeWidth={1.600} /></Sv></div>
      </div>
      <div className="relative flex-1">
        <Row cls="bg-[#282828] pl-[22px]" eye={false}><Archive /><span className="ml-[8px] text-[#bdbdbd]">シーンコレクション</span></Row>
        <Row cls="bg-[#2b2b2b] pl-[26px]" check>
          <Arrow open cls="" />
          <div className="ml-[6px] flex h-[18px] w-[19px] items-center justify-center rounded-[4px] border border-[#666] bg-[#454545]"><Archive s={14} /></div>
          <span className="ml-[5px]">Collection</span>
        </Row>
        <Row cls="bg-[#282828] pl-[47px]">
          <Arrow cls="" />
          <Sv s={16} className="ml-[8px] text-[#d98a4a]"><circle cx="5" cy="4" r="2.800" fill="currentColor" stroke="none" /><circle cx="11" cy="4" r="2.800" fill="currentColor" stroke="none" /><rect x="2" y="7.500" width="10" height="6.500" fill="currentColor" stroke="none" /><path d="M12 10.500 15 9v4l-3-1.500Z" fill="currentColor" stroke="none" /></Sv>
          <span className="ml-[7px] w-[59px]">Camera</span>
          <div className="flex h-[18px] w-[19px] items-center justify-center rounded-[4px] bg-[#4c4c4c]"><Sv s={15} className="text-[#2ec4a6]"><circle cx="5" cy="4.500" r="3" /><circle cx="10.500" cy="4.500" r="3" /><rect x="3" y="9" width="8" height="4.500" /><path d="M11 11l3-1.500v3.500Z" /></Sv></div>
        </Row>
        <Row cls="bg-[#2b2b2b] pl-[47px]">
          <Arrow cls="" />
          <Sv s={16} className="ml-[8px] text-[#d98a4a]"><circle cx="8" cy="6" r="5" fill="currentColor" stroke="none" /><path d="M5.500 12h5M6 14.500h4" strokeWidth={1.500} /><path d="M6 5v3M10 5v3" stroke="#333" /></Sv>
          <span className="ml-[7px] w-[47px]">Light</span>
          <Sv s={15} className="text-[#2ec4a6]"><path d="M7.500 14.500C4 10.500 2 8.500 2 6a5.500 5.500 0 0 1 11 0c0 2.500-2 4.500-5.500 8.500Z" strokeWidth={1} /><circle cx="7.500" cy="6" r="1" fill="currentColor" /></Sv>
        </Row>
        <Row cls="bg-[#334b78] pl-[47px]">
          <Arrow cls="" />
          <div className="ml-[6px] flex h-[19px] w-[19px] items-center justify-center rounded-[4px] border border-[#5c7099] bg-[#4d648f]"><svg width="14" height="14" viewBox="0 0 14 14"><path d="M1 2h12L7 13Z" fill="#d9924f" /><path d="M4.500 4.500h5L7 9Z" fill="#4d648f" /></svg></div>
          <span className="ml-[5px] w-[71px] text-[#f2a33a]">Snowman</span>
          <VMesh />
        </Row>
        <div className="absolute left-[29px] top-[45px] h-[50px] w-px bg-[#5a5a5a]" />
        {[0, 1, 2, 3, 4, 5].map((i) => <div key={i} className={"h-[20px] " + (i % 2 ? "bg-[#282828]" : "bg-[#2b2b2b]")} />)}
      </div>
    </div>
  );
}

/* ---------- properties ---------- */
function PropRow({ l, v, cls = "", wide, lock, closed }: { l?: string; v: string; cls?: string; wide?: boolean; lock?: boolean; closed?: boolean }) {
  return (
    <div className="mb-[1px] flex h-[19px] items-center">
      <span className="w-[105px] shrink-0 whitespace-nowrap text-right text-[#c4c4c4]">{l}</span>
      <div className={"ml-[10px] flex h-full items-center justify-center bg-[#545454] text-[#e0e0e0] " + (wide ? "w-[146px] " : "w-[126px] ") + cls}><span className="tracking-[0.45px]">{v}</span></div>
      {lock && <div className="flex w-[22px] justify-center"><Lock closed={closed} /></div>}
      <div className={"flex w-[8px] justify-center " + (wide ? "ml-[7px]" : lock ? "ml-[5px]" : "ml-[27px]")}><Dot /></div>
    </div>
  );
}
function Group({ vals, label, wide, closedFirst }: { vals: string[]; label: string; wide?: boolean; closedFirst?: boolean }) {
  return (
    <>
      <PropRow l={label + " X"} v={vals[0]} cls="rounded-t-[4px]" wide={wide} lock={!wide} closed={closedFirst} />
      <PropRow l="Y" v={vals[1]} wide={wide} lock={!wide} />
      <PropRow l="Z" v={vals[2]} cls="rounded-b-[4px]" wide={wide} lock={!wide} />
    </>
  );
}
const TabI = ({ children, cls }: P & { cls: string }) => <div className={"flex items-center justify-center " + cls}>{children}</div>;
function Tabs() {
  return (
    <div className="relative w-[29px] shrink-0 bg-[#1f1f1f] pl-[2px] pt-[10px]">
      <TabI cls="h-[24px]"><Sv s={16} className="text-[#d4d4d4]"><path d="M2 1v6M5 1v6" strokeWidth={1.200} /><rect x="1.500" y="8" width="4.500" height="6.500" fill="currentColor" stroke="none" /><path d="M11 7v7.500" strokeWidth={2.400} /><path d="M8 1v3a3 3 0 0 0 6 0V1l-1.500 2h-3Z" fill="currentColor" stroke="none" /></Sv></TabI>
      <div className="mt-[4px] mb-[4px] h-px bg-[#2a2a2a]" />
      <TabI cls="h-[28px]"><Sv s={16} className="text-[#d4d4d4]"><rect x="1" y="4" width="14" height="11" fill="currentColor" stroke="none" /><path d="M5 4V1.500h3V4" /><circle cx="6" cy="9" r="2.800" fill="#1f1f1f" stroke="none" /><path d="M12 7h2M12 10h2" stroke="#1f1f1f" /></Sv></TabI>
      <TabI cls="h-[30px]"><Sv s={16} className="text-[#d4d4d4]"><rect x="1" y="2" width="14" height="4" fill="currentColor" stroke="none" /><rect x="3" y="7" width="10" height="7.500" fill="currentColor" stroke="none" /><path d="m5 13 3-3 3 3Z" fill="#1f1f1f" stroke="none" /></Sv></TabI>
      <TabI cls="h-[26px]"><Layers /></TabI>
      <TabI cls="h-[30px]"><Scene /></TabI>
      <TabI cls="h-[26px]"><Sv s={16} className="text-[#b85c64]"><circle cx="8" cy="8" r="5.600" strokeWidth={1} /><path d="M5 5.500c1.500-1.500 2 .5 3 0s2.500-1 3 1-2 1-2 3-1.500 2.500-2 1-2.500-2-2-5Z" fill="currentColor" stroke="none" /><path d="M3 14 13 2" strokeWidth={0.8} /></Sv></TabI>
      <div className="mt-[4px] mb-[4px] h-px bg-[#2a2a2a]" />
      <TabI cls="h-[28px]"><Sv s={16} className="text-[#d4d4d4]"><rect x="1.500" y="2" width="13" height="3" strokeWidth={1} /><path d="M2.500 5v9h11V5M6 8h4" strokeWidth={1} /></Sv></TabI>
      <div className="mt-[4px] mb-[4px] h-px bg-[#2a2a2a]" />
      <div className="flex h-[26px] items-center justify-center rounded-l-[4px] bg-[#303030]"><Sv s={16} className="text-[#e09a5a]"><path d="M1 4V1h3M12 1h3v3M15 12v3h-3M4 15H1v-3" strokeWidth={1} /><rect x="3.500" y="3.500" width="9" height="9" fill="currentColor" stroke="none" /></Sv></div>
      <TabI cls="h-[32px]"><Sv s={16} className="text-[#5a86d6]"><path d="M2 14.500 8 8a4 4 0 0 1 5-6l-3 2.500L12 6.500 14.500 4a4 4 0 0 1-6 4.500L4 14.500Z" fill="currentColor" stroke="none" /></Sv></TabI>
      <TabI cls="h-[20px]"><Sv s={16} className="text-[#5a86d6]"><path d="M3 3h11M3 3l10 10" strokeWidth={1} /><circle cx="3" cy="3" r="2" fill="currentColor" stroke="none" /><circle cx="14" cy="3" r="1.800" fill="currentColor" stroke="none" /><circle cx="13" cy="13" r="1.800" fill="currentColor" stroke="none" /><circle cx="3" cy="12" r="1.500" fill="currentColor" stroke="none" /></Sv></TabI>
      <TabI cls="h-[38px]"><Sv s={16} className="text-[#5a86d6]"><circle cx="7" cy="9" r="3" fill="currentColor" stroke="none" /><path d="M13 8a6 6 0 1 1-10-5" strokeWidth={1.100} /><circle cx="12.500" cy="3.500" r="1.800" fill="currentColor" stroke="none" /></Sv></TabI>
      <TabI cls="h-[18px]"><Sv s={16} className="text-[#5a86d6]"><path d="M2 13c-2-3 7-11 11-11s2 8-3 10-7 3-8 1Z" strokeWidth={1.200} /><circle cx="7" cy="9" r="2.300" fill="currentColor" stroke="none" /></Sv></TabI>
      <TabI cls="h-[38px]"><VMesh className="text-[#1fbf9f]" s={16} /></TabI>
      <TabI cls="h-[18px]"><svg width="16" height="16" viewBox="0 0 16 16"><circle cx="8" cy="8" r="7" fill="#b85c64" /><path d="M1.500 8.500A6.500 6.500 0 0 0 5 14c2 .5 3-.5 3.500-2 .3-1.500 1-3 2-4H1.500Z" fill="#1f1f1f" /></svg></TabI>
      <div className="mt-[7px] mb-[7px] h-px bg-[#2a2a2a]" />
      <TabI cls="h-[24px]">
        <svg width="15" height="15" viewBox="0 0 15 15"><rect width="15" height="15" fill="#b85c64" /><path d="M3 0h3v3H3ZM9 0h3v3H9ZM0 3h3v3H0ZM6 3h3v3H6ZM12 3h3v3h-3ZM3 6h3v3H3ZM9 6h3v3H9ZM0 9h3v3H0ZM6 9h3v3H6ZM12 9h3v3h-3ZM3 12h3v3H3ZM9 12h3v3H9Z" fill="#1f1f1f" /></svg>
      </TabI>
    </div>
  );
}
const Grip = () => <svg width="11" height="5" viewBox="0 0 11 5" fill="#8a8a8a" className="ml-auto mr-[6px]">{[0, 3, 6, 9].flatMap((x) => [0, 3].map((y) => <rect key={x + "-" + y} x={x} y={y} width="1.500" height="1.500" />))}</svg>;
function Properties() {
  return (
    <div className="flex min-h-0 flex-1 flex-col overflow-hidden rounded-[5px] bg-[#303030] text-[11px] text-[#c8c8c8]">
      <div className="flex h-[25px] shrink-0 items-center bg-[#333] pl-[9px] pr-[7px]">
        <DD className="w-[32px] justify-center gap-[1px]"><Sv s={16}><rect x="1" y="2" width="14" height="5.500" rx="2.700" fill="currentColor" stroke="none" /><rect x="1" y="9" width="14" height="5.500" rx="2.700" fill="currentColor" stroke="none" /><circle cx="11" cy="4.700" r="1.800" fill="#2d2d2d" stroke="none" /><circle cx="5" cy="11.700" r="1.800" fill="#2d2d2d" stroke="none" /></Sv><Chev /></DD>
        <div className="ml-[72px] flex h-[19px] w-[110px] items-center rounded-[4px] border border-[#333] bg-[#262626] pl-[3px] text-[#e0e0e0]"><Search size={15} strokeWidth={1.300} className="-scale-x-100" /></div>
        <DD className="ml-auto w-[20px] justify-center"><Chev /></DD>
      </div>
      <div className="flex min-h-0 flex-1">
        <Tabs />
        <div className="min-w-0 flex-1 overflow-hidden pl-[8px] pr-[7px]">
          <div className="flex h-[44px] items-center pb-[8px] pl-[3px] pr-[1px]">
            <ObjIcon s={16} className="text-[#e8e8e8]" /><span className="ml-[7px]">Snowman</span>
            <Pin size={15} strokeWidth={1} className="ml-auto rotate-45 text-[#bbb]" />
          </div>
          <div className="flex h-[19px] overflow-hidden rounded-[4px] border border-[#2a2a2a]">
            <div className="flex w-[31px] items-center justify-center gap-[1px] bg-[#2d2d2d]"><ObjIcon s={15} className="text-[#e8e8e8]" /><Chev /></div>
            <div className="flex flex-1 items-center bg-[#1d1d1d] pl-[7px]"><span>Snowman</span></div>
          </div>
          <div className="mt-[11px] rounded-[4px] bg-[#3d3d3d] pb-[7px]">
            <div className="flex h-[26px] items-center pl-[8px]"><Chev /><span className="ml-[4px] text-[#c4c4c4]">トランスフォーム</span><Grip /></div>
            <div className="h-[8px]" />
            <Group label="位置" vals={["0 m", "0.67989 m", "3.11 m"]} closedFirst />
            <div className="h-[5px]" />
            <Group label="回転" vals={["160°", "160°", "0°"]} />
            <div className="h-[5px]" />
            <div className="flex h-[18px] items-center">
              <span className="w-[105px] text-right">モード</span>
              <div className="ml-[10px] flex h-full w-[126px] items-center justify-between rounded-[4px] bg-[#282828] pl-[7px] pr-[3px]"><span>XYZ オイラー角</span><Chev /></div>
              <div className="ml-[27px] flex w-[8px] justify-center"><Dot /></div>
            </div>
            <div className="h-[7px]" />
            <Group label="スケール" vals={["0.300", "0.300", "0.300"]} />
            <div className="mt-[11px] flex h-[21px] items-center bg-[#404040] pl-[22px]"><Chev /><span className="ml-[4px] text-[#c4c4c4]">デルタトランスフォーム</span></div>
            <div className="h-[10px]" />
            <Group wide label="位置" vals={["0 m", "0 m", "0 m"]} />
            <div className="h-[2px]" />
            <Group wide label="回転" vals={["0°", "0°", "0°"]} />
            <div className="h-[2px]" />
            <Group wide label="スケール" vals={["1.000", "1.000", "1.000"]} />
          </div>
          <div className="mt-[2px] rounded-[4px] bg-[#3d3d3d] pb-[6px]">
            <div className="flex h-[26px] items-center pl-[8px]"><Chev /><span className="ml-[4px] text-[#c4c4c4]">関係</span><Grip /></div>
            <div className="h-[8px]" />
            <div className="flex h-[18px] items-center">
              <span className="w-[105px] text-right">ペアレント</span>
              <div className="ml-[10px] flex h-full w-[146px] items-center justify-between rounded-[4px] bg-[#1d1d1d] pl-[4px] pr-[3px]"><ObjIcon s={15} className="text-[#e8e8e8]" /><Pipette size={15} strokeWidth={1.400} className="text-[#ddd]" /></div>
            </div>
            <div className="mt-[4px] flex h-[18px] items-center text-[#7c7c7c]">
              <span className="w-[105px] text-right">親タイプ</span>
              <div className="ml-[10px] flex h-full w-[146px] items-center justify-between rounded-[4px] bg-[#353535] pl-[7px] pr-[3px]"><span>オブジェクト</span><Chev className="text-[#555]" /></div>
              <div className="ml-[7px] flex w-[8px] justify-center"><Dot className="bg-[#777]" /></div>
            </div>
            <div className="mt-[6px] flex h-[18px] items-center text-[#7c7c7c]">
              <div className="ml-[115px] h-[12px] w-[12px] rounded-[3px] bg-[#4a4a4a]" />
              <span className="ml-[5px] w-[129px]">カメラの親をロック</span>
              <div className="ml-[7px] flex w-[8px] justify-center"><Dot className="bg-[#777]" /></div>
            </div>
          </div>
        </div>
      </div>
    </div>
  );
}

const Mouse = () => (
  <svg width="11" height="16" viewBox="0 0 11 16" fill="none" stroke="#d4d4d4" className="shrink-0"><rect x="1" y="1" width="9" height="14" rx="4" /><path d="M5.500 1v6M1 7h4.500" /></svg>
);
export default function App() {
  return (
    <div className="flex h-[1082px] w-[1922px] flex-col overflow-hidden bg-[#1a1a1a] [font-family:'DejaVu_Sans','Noto_Sans_CJK_JP',sans-serif] font-stretch-condensed [&_span]:translate-y-[1px]">
      <TitleBar />
      <TopBar />
      <div className="flex min-h-0 flex-1 gap-[2px] pl-[2px] pr-[2px] pt-[2px]">
        <div className="flex w-[1582px] flex-col gap-[3px]"><Viewport /><Timeline /></div>
        <div className="flex min-w-0 flex-1 flex-col gap-[3px]"><Outliner /><Properties /></div>
      </div>
      <div className="flex h-[20px] shrink-0 items-center bg-[#1d1d1d] text-[11px] text-[#a8a8a8]">
        <div className="ml-[13px]"><Mouse /></div><span className="ml-[12px] w-[188px]">選択</span>
        <Mouse /><span className="ml-[11px] w-[189px]">視点の移動</span>
        <Mouse /><span className="ml-[12px]">コンテクストメニュー</span>
        <span className="ml-auto mr-[10px] tracking-[0.5px] text-[#8a8a8a]">3.2.0</span>
      </div>
      <div className="h-[2px] shrink-0 bg-[#c8c8c8]" />
    </div>
  );
}
